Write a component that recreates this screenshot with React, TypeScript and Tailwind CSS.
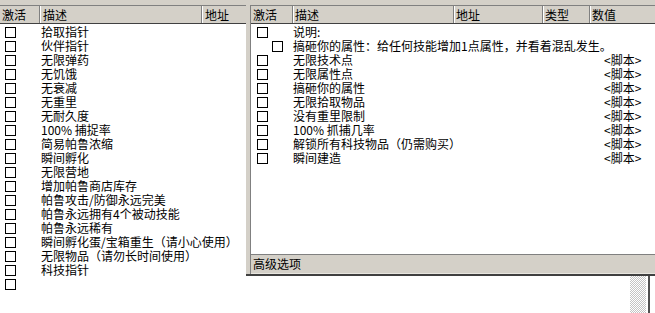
import React from "react";

const leftItems = [
  "拾取指针",
  "伙伴指针",
  "无限弹药",
  "无饥饿",
  "无衰减",
  "无重里",
  "无耐久度",
  "100% 捕捉率",
  "简易帕鲁浓缩",
  "瞬间孵化",
  "无限营地",
  "增加帕鲁商店库存",
  "帕鲁攻击/防御永远完美",
  "帕鲁永远拥有4个被动技能",
  "帕鲁永远稀有",
  "瞬间孵化蛋/宝箱重生（请小心使用）",
  "无限物品（请勿长时间使用）",
  "科技指针",
  "",
];

const rightItems: { text: string; indent?: boolean; script?: boolean }[] = [
  { text: "说明:" },
  { text: "搞砸你的属性：给任何技能增加1点属性，并看着混乱发生。", indent: true },
  { text: "无限技术点", script: true },
  { text: "无限属性点", script: true },
  { text: "搞砸你的属性", script: true },
  { text: "无限拾取物品", script: true },
  { text: "没有重里限制", script: true },
  { text: "100% 抓捕几率", script: true },
  { text: "解锁所有科技物品（仍需购买）", script: true },
  { text: "瞬间建造", script: true },
];

function Check() {
  return <div className="w-[11px] h-[11px] border border-black bg-white shrink-0" />;
}

export default function App() {
  return (
    <div className="w-[655px] h-[313px] bg-white flex overflow-hidden text-[12px] leading-[14px] text-black font-[family-name:Noto_Sans_CJK_SC,sans-serif]">
      {/* Left list */}
      <div className="w-[246px] h-full flex flex-col bg-white shrink-0">
        <div className="h-[6px] bg-[#d4d0c8] border-b border-[#808080]" />
        <div className="h-[18px] bg-[#d4d0c8] flex border-b border-[#404040]">
          <div className="w-[40px] h-full flex items-center pl-[2px] border-r border-[#808080]">激活</div>
          <div className="w-[162px] h-full flex items-center pl-[2px] border-r border-[#808080] border-l border-l-white">描述</div>
          <div className="flex-1 h-full flex items-center pl-[2px] border-l border-l-white">地址</div>
        </div>
        <div className="flex flex-col pt-[1px]">
          {leftItems.map((t, i) => (
            <div key={i} className="h-[14px] flex items-center">
              <div className="w-[41px] pl-[5px] flex items-center">
                <Check />
              </div>
              <div className="whitespace-nowrap h-[14px] leading-[14px]">{t}</div>
            </div>
          ))}
        </div>
      </div>

      {/* Right panel */}
      <div className="flex-1 flex flex-col">
        <div className="h-[276px] flex flex-col bg-[#d4d0c8] border-b-2 border-[#404040]">
          <div className="flex-1 flex pt-[5px] pl-[4px]">
            <div className="flex-1 flex flex-col bg-white border-l border-t border-[#808080]">
              <div className="h-[18px] bg-[#d4d0c8] flex border-b border-[#404040] shrink-0">
                <div className="w-[42px] h-full flex items-center pl-[2px] border-r border-[#808080]">激活</div>
                <div className="w-[161px] h-full flex items-center pl-[1px] border-r border-[#808080] border-l border-l-white">描述</div>
                <div className="w-[89px] h-full flex items-center pl-[1px] border-r border-[#808080] border-l border-l-white">地址</div>
                <div className="w-[47px] h-full flex items-center pl-[1px] border-r border-[#808080] border-l border-l-white">类型</div>
                <div className="flex-1 h-full flex items-center pl-[1px] border-l border-l-white">数值</div>
              </div>
              <div className="flex-1 flex flex-col pt-[1px]">
                {rightItems.map((r, i) => (
                  <div key={i} className="h-[14px] flex items-center">
                    <div className={`w-[42px] flex items-center ${r.indent ? "pl-[21px]" : "pl-[6px]"}`}>
                      <Check />
                    </div>
                    <div className="w-[161px] whitespace-nowrap overflow-visible h-[14px] leading-[14px]">{r.text}</div>
                    <div className="w-[89px]" />
                    <div className="w-[47px]" />
                    <div className="flex-1 pl-[14px] whitespace-nowrap h-[14px] leading-[14px]">{r.script ? "<脚本>" : ""}</div>
                  </div>
                ))}
              </div>
              <div className="h-[20px] bg-[#d4d0c8] border-t border-[#808080] border-b border-b-[#e8e6e0] flex items-center pl-[2px] shrink-0">
                高级选项
              </div>
            </div>
          </div>
        </div>
        <div className="flex-1 flex justify-end">
          <div className="w-[16px] h-full bg-[repeating-conic-gradient(#c4c4c4_0%_25%,#ffffff_0%_50%)] bg-[length:2px_2px]" />
          <div className="w-[2px]" />
          <div className="w-[2px] h-full bg-[#505050]" />
          <div className="w-[5px]" />
        </div>
      </div>
    </div>
  );
}
